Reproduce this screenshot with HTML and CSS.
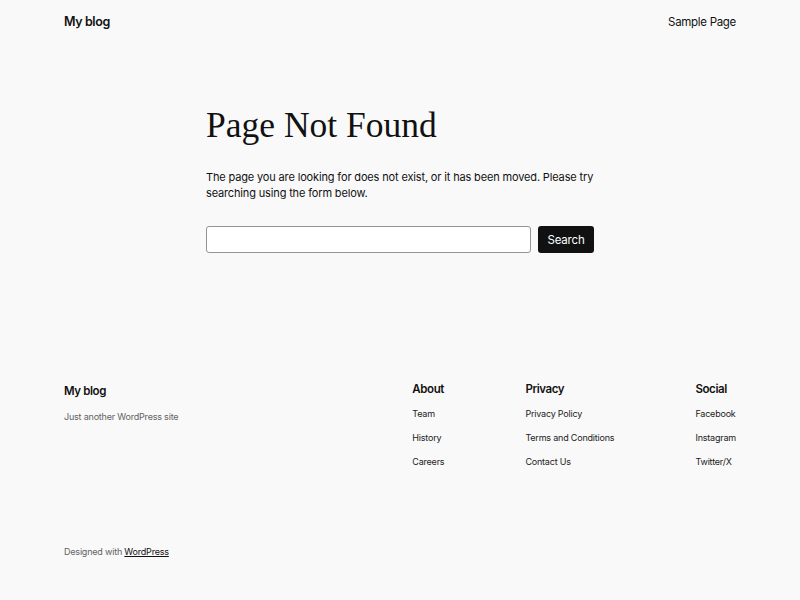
FILE: index.html
```html
<!DOCTYPE html>
<html lang="en">
<head>
  <meta charset="UTF-8">
  <title>Page not found – My blog</title>
  <link rel="stylesheet" href="styles.css">
</head>
<body>
  <header class="site-header">
    <a class="site-title" href="#">My blog</a>
    <nav class="site-nav">
      <a href="#">Sample Page</a>
    </nav>
  </header>

  <main class="content">
    <h1 class="page-title">Page Not Found</h1>
    <p class="lead">The page you are looking for does not exist, or it has been moved. Please try searching using the form below.</p>
    <form class="search" onsubmit="return false">
      <input class="search-input" type="search" aria-label="Search">
      <button class="search-button" type="submit">Search</button>
    </form>
  </main>

  <footer class="site-footer">
    <div class="footer-row">
      <div class="footer-brand">
        <a class="footer-title" href="#">My blog</a>
        <p class="tagline">Just another WordPress site</p>
      </div>
      <div class="footer-menus">
        <div class="menu">
          <h2>About</h2>
          <ul>
            <li><a href="#">Team</a></li>
            <li><a href="#">History</a></li>
            <li><a href="#">Careers</a></li>
          </ul>
        </div>
        <div class="menu">
          <h2>Privacy</h2>
          <ul>
            <li><a href="#">Privacy Policy</a></li>
            <li><a href="#">Terms and Conditions</a></li>
            <li><a href="#">Contact Us</a></li>
          </ul>
        </div>
        <div class="menu">
          <h2>Social</h2>
          <ul>
            <li><a href="#">Facebook</a></li>
            <li><a href="#">Instagram</a></li>
            <li><a href="#">Twitter/X</a></li>
          </ul>
        </div>
      </div>
    </div>
    <p class="credit">Designed with <a href="#">WordPress</a></p>
  </footer>
</body>
</html>
```

FILE: styles.css
```css
body {
  margin: 0;
  padding: 0 64px;
  background: #f9f9f9;
  color: #111111;
  font-family: Inter, "Noto Sans", sans-serif;
  font-size: 12px;
}
a {
  color: inherit;
  text-decoration: none;
}

/* header */
.site-header {
  height: 42px;
  display: flex;
  align-items: center;
  justify-content: space-between;
}
.site-title {
  font-size: 12.5px;
  font-weight: 600;
  letter-spacing: -0.4px;
}
.site-nav a {
  font-size: 11.5px;
  letter-spacing: -0.3px;
}

/* 404 content */
.content {
  width: 388px;
  margin: 0 auto;
  padding-top: 62px;
}
.page-title {
  margin: 0;
  font-family: "Liberation Serif", "DejaVu Serif", serif;
  font-weight: 400;
  font-size: 35.5px;
  line-height: 42px;
}
.lead {
  margin: 23px 0 0;
  font-size: 11px;
  line-height: 16px;
  letter-spacing: -0.15px;
}
.search {
  display: flex;
  gap: 7px;
  margin-top: 25px;
}
.search-input {
  flex: 1;
  height: 27px;
  box-sizing: border-box;
  border: 1px solid #949494;
  border-radius: 3px;
  background: #ffffff;
  font: inherit;
}
.search-button {
  width: 56px;
  height: 27px;
  border: none;
  border-radius: 3px;
  background: #111111;
  color: #ffffff;
  font-family: inherit;
  font-size: 11.5px;
  letter-spacing: -0.2px;
  cursor: pointer;
}

/* footer */
.site-footer {
  padding-top: 128px;
}
.footer-row {
  display: flex;
  justify-content: space-between;
  align-items: flex-start;
}
.footer-title {
  display: block;
  padding-top: 2px;
  font-size: 11.5px;
  line-height: 16px;
  font-weight: 600;
  letter-spacing: -0.4px;
}
.tagline {
  margin: 10px 0 0;
  font-size: 9px;
  line-height: 16px;
  letter-spacing: -0.2px;
  color: #636363;
}
.footer-menus {
  display: flex;
  gap: 81px;
}
.menu h2 {
  margin: 0;
  font-size: 11.5px;
  line-height: 16px;
  font-weight: 600;
  letter-spacing: -0.4px;
}
.menu ul {
  list-style: none;
  margin: 9px 0 0;
  padding: 0;
  display: flex;
  flex-direction: column;
  gap: 8px;
}
.menu li {
  font-size: 9px;
  line-height: 16px;
  letter-spacing: -0.2px;
  color: #222222;
}
.credit {
  margin: 74px 0 0;
  font-size: 9px;
  line-height: 16px;
  letter-spacing: -0.2px;
  color: #636363;
}
.credit a {
  color: #111111;
  text-decoration: underline;
}
```
